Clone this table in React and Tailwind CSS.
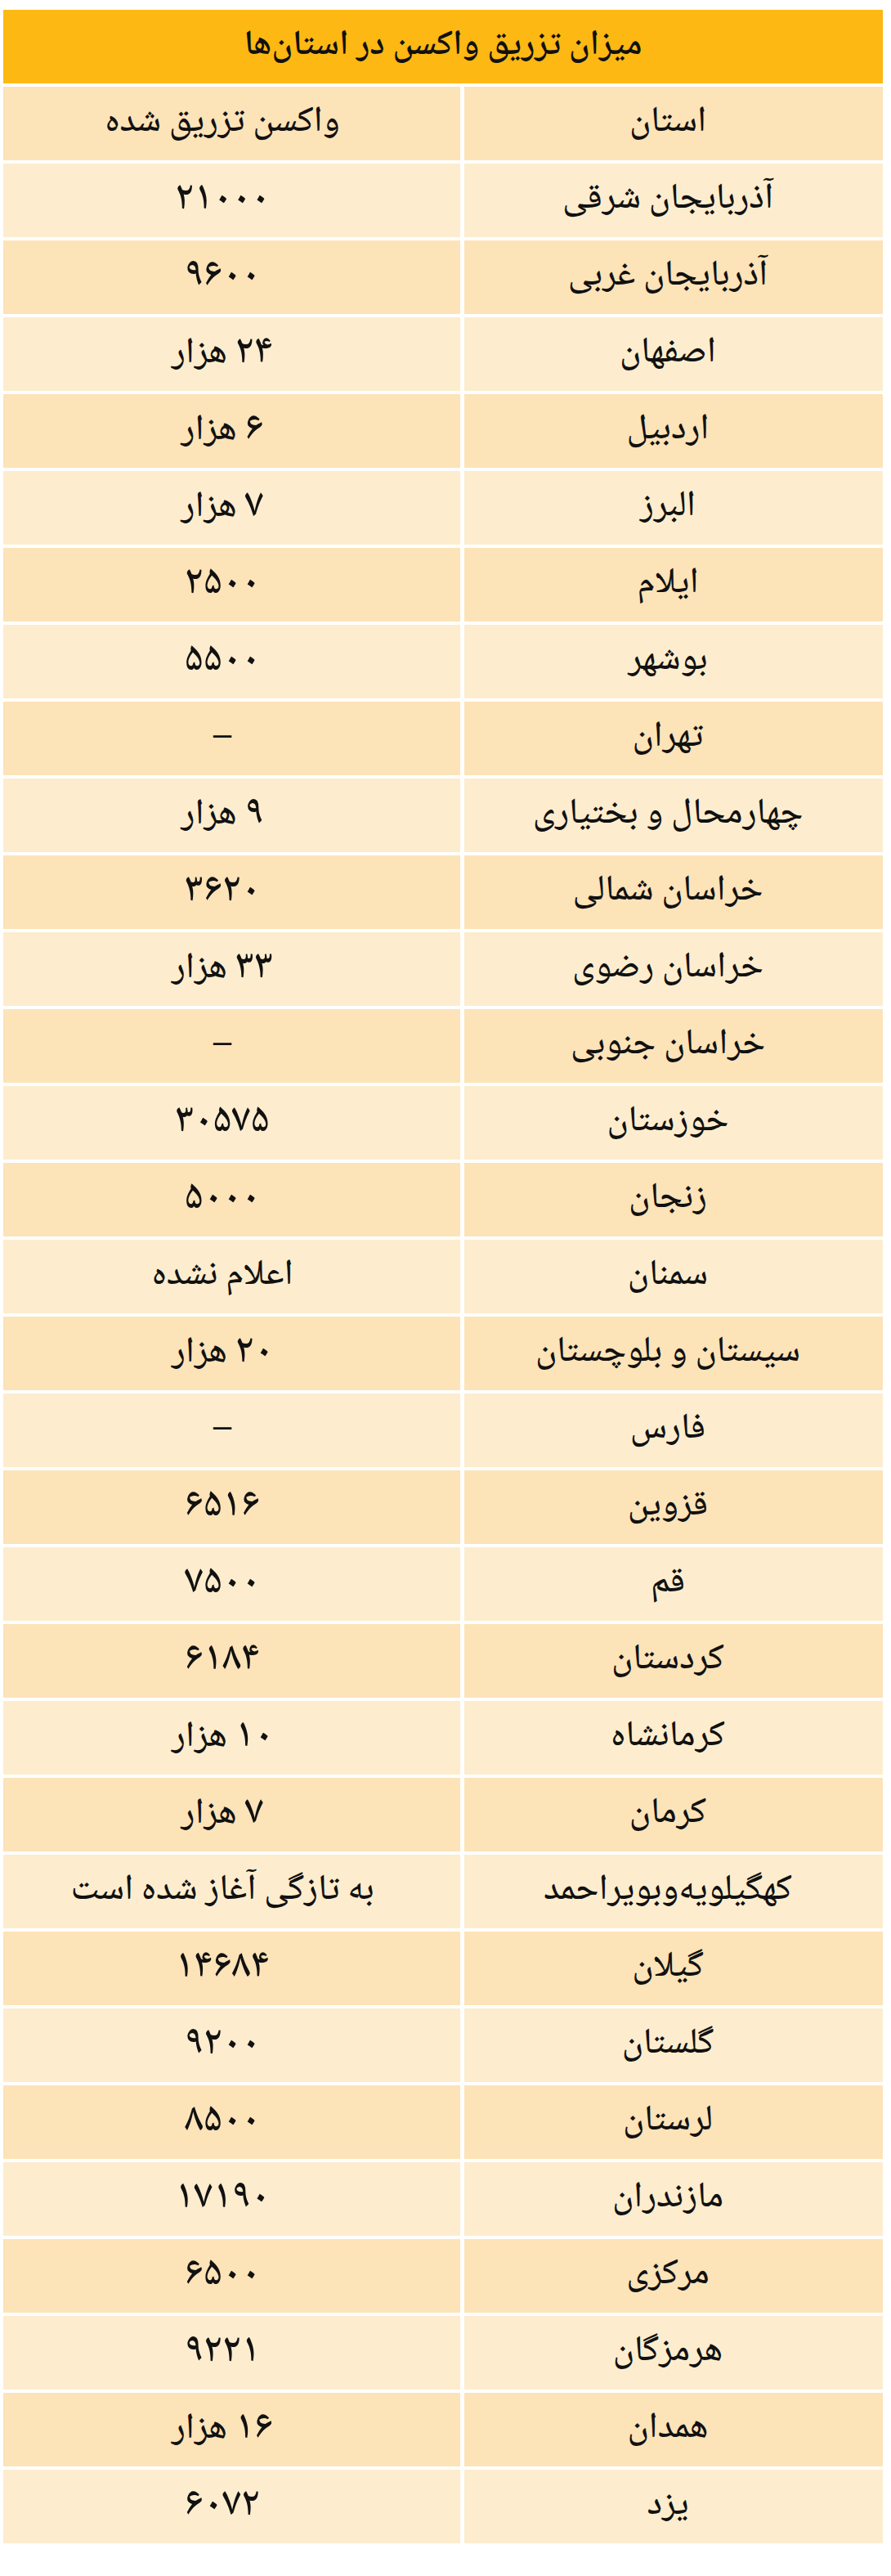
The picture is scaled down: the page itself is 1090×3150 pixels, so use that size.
const rows = [
  ['آذربایجان شرقی', '۲۱۰۰۰'],
  ['آذربایجان غربی', '۹۶۰۰'],
  ['اصفهان', '۲۴ هزار'],
  ['اردبیل', '۶ هزار'],
  ['البرز', '۷ هزار'],
  ['ایلام', '۲۵۰۰'],
  ['بوشهر', '۵۵۰۰'],
  ['تهران', '–'],
  ['چهارمحال و بختیاری', '۹ هزار'],
  ['خراسان شمالی', '۳۶۲۰'],
  ['خراسان رضوی', '۳۳ هزار'],
  ['خراسان جنوبی', '–'],
  ['خوزستان', '۳۰۵۷۵'],
  ['زنجان', '۵۰۰۰'],
  ['سمنان', 'اعلام نشده'],
  ['سیستان و بلوچستان', '۲۰ هزار'],
  ['فارس', '–'],
  ['قزوین', '۶۵۱۶'],
  ['قم', '۷۵۰۰'],
  ['کردستان', '۶۱۸۴'],
  ['کرمانشاه', '۱۰ هزار'],
  ['کرمان', '۷ هزار'],
  ['کهگیلویه‌وبویراحمد', 'به تازگی آغاز شده است'],
  ['گیلان', '۱۴۶۸۴'],
  ['گلستان', '۹۲۰۰'],
  ['لرستان', '۸۵۰۰'],
  ['مازندران', '۱۷۱۹۰'],
  ['مرکزی', '۶۵۰۰'],
  ['هرمزگان', '۹۲۲۱'],
  ['همدان', '۱۶ هزار'],
  ['یزد', '۶۰۷۲'],
];

// digits in the source art are drawn much taller than the letters
function Value({ text }) {
  return text.split(/([۰-۹]+)/).map((part, i) =>
    /^[۰-۹]+$/.test(part) ? (
      <span key={i} className="text-[50px] tracking-[7px]">{part}</span>
    ) : (
      <span key={i}>{part}</span>
    )
  );
}

export default function App() {
  const all = [['استان', 'واکسن تزریق شده'], ...rows];

  return (
    <div className="min-h-[3150px] bg-white pt-[12px] pl-[4px] font-['Noto_Naskh_Arabic','Noto_Sans_Arabic','DejaVu_Sans',sans-serif] text-[#111]">
      <div dir="rtl" className="grid w-[1076px] grid-cols-[512px_559px] gap-x-[5px] gap-y-[4px]">
        {/* title */}
        <div className="col-span-2 flex h-[90px] items-center justify-center bg-[#fdb813] text-[43px] font-semibold">
          میزان تزریق واکسن در استان‌ها
        </div>

        {all.map(([province, value], i) => {
          const bg = i % 2 === 0 ? 'bg-[#fde3b8]' : 'bg-[#fdedce]';
          return [
            <div key={province} className={`flex h-[90px] items-center justify-center pr-[14px] text-[44px] font-medium leading-none ${bg}`}>
              {province}
            </div>,
            <div key={province + '-v'} className={`flex h-[90px] items-center justify-center pr-[23px] text-[44px] font-medium leading-none ${bg}`}>
              <span><Value text={value} /></span>
            </div>,
          ];
        })}
      </div>
    </div>
  );
}
